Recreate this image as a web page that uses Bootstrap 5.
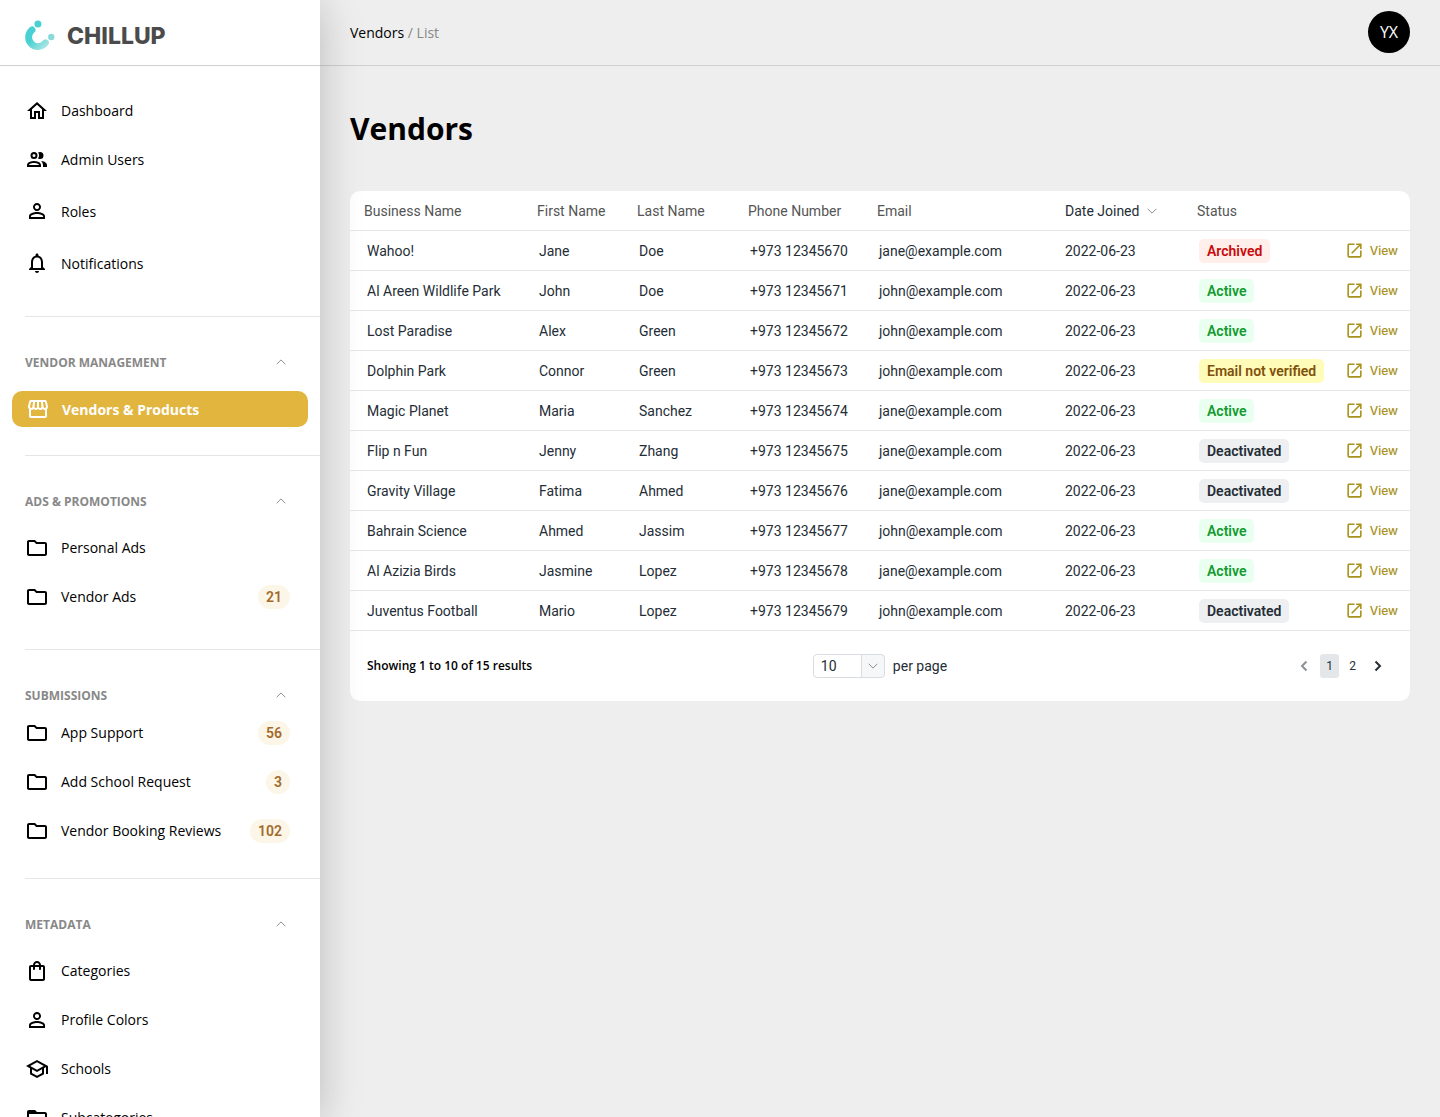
<!DOCTYPE html>
<html lang="en">
<head>
<meta charset="utf-8">
<meta name="viewport" content="width=device-width, initial-scale=1">
<title>Vendors - Chillup</title>
<link rel="stylesheet" href="https://cdn.jsdelivr.net/npm/bootstrap@5.3.0/dist/css/bootstrap.min.css">
<style>
  body { background: #eee; font-family: "Open Sans", "Noto Sans", sans-serif; font-size: 14px; color: #000; }
  a { color: inherit; text-decoration: none; }
  .ico { width: 24px; height: 24px; fill: currentColor; flex: none; }
  .chev { width: 10px; height: 6px; fill: none; stroke: #8f8f8f; flex: none; }
  .topbar { height: 66px; border-bottom: 1px solid #cfcfcf; }

  .sidebar { width: 320px; background: #fff; box-shadow: 0 4px 40px rgba(0, 0, 0, .22); overflow: hidden; z-index: 1; }
  .brand { padding: 6px 0 0 23px; gap: 12px; }
  .brand-name { font: 800 23px/32px Inter, sans-serif; color: #4b4b4b; }
  .menu-start { padding: 20px 0 27px; }
  .menu-link { height: 49px; padding: 0 30px 0 25px; gap: 12px; }
  .menu-tall { margin-top: 1px; }
  .menu-tall .menu-link { height: 52px; }
  .menu-section { margin-left: 25px; border-top: 1px solid #e6e6e6; padding: 35px 0 28px; }
  .menu-section .menu-link { padding-left: 0; }
  .menu-title { height: 22px; padding: 0 34px 0 0; border: 0; background: none; font-size: 12px; font-weight: 700; color: #888; margin-bottom: 10px; }
  .menu-title .chev { margin-bottom: 3px; }
  .menu-section.tight .menu-title { margin-bottom: 1px; }
  .menu-section.tight { padding-bottom: 23px; }
  .menu-active { height: 36px; margin: 17px 12px 0 -13px; padding: 0 14px; gap: 12px; border-radius: 10px; background: #e2b53e; color: #fff; font-weight: 700; }
  .count { height: 24px; padding: 0 8px; border-radius: 12px; background: #fcf6e8; color: #a3692a; font: 600 14px/24px Roboto, sans-serif; }

  .page-head { padding: 0 30px 2px; }
  .crumbs { font-weight: 500; padding-top: 2px; }
  .crumb-now { color: #888; font-weight: 400; }
  .avatar { width: 42px; height: 42px; border-radius: 50%; background: #000; color: #fff; border: 0; font: 500 16px/20px "Open Sans", sans-serif; padding: 0; }
  .page-body { padding: 40px 30px; }
  .page-title { font-size: 30px; line-height: 45px; font-weight: 700; margin: 0 0 40px; }

  .panel { background: #fff; border-radius: 10px; font-family: Roboto, sans-serif; color: #252d36; }
  .vendors { width: 100%; table-layout: fixed; border-collapse: separate; border-spacing: 0; }
  .vendors th, .vendors td { height: 40px; padding: 0 0 0 16px; border-bottom: 1px solid #e5e7ea; white-space: nowrap; line-height: 20px; }
  .vendors th { padding-left: 14px; font-weight: 400; color: #555; }
  .vendors td.biz { padding: 0 16px 0 17px; white-space: normal; vertical-align: top; }
  .biz-name { height: 38px; padding-top: 8px; line-height: 24px; overflow: hidden; }
  .vendors td.joined { padding-left: 14px; }
  .vendors td.act, .vendors th.act { padding: 0 12px 0 0; }
  .c-biz { width: 173px; } .c-first { width: 100px; } .c-last { width: 111px; } .c-phone { width: 129px; }
  .c-mail { width: 188px; } .c-date { width: 132px; } .c-status { width: 146px; }
  .sort { border: 0; background: none; padding: 0; color: #252d36; gap: 8px; }
  .state { display: inline-block; height: 24px; padding: 0 8px; border-radius: 5px; font-weight: 600; line-height: 24px; vertical-align: middle; }
  .st-archived { background: #ffeeea; color: #c90a0a; }
  .st-active { background: #e9ffef; color: #149a2e; }
  .st-email { background: #fffbb8; color: #80510b; }
  .st-off { background: #eeeff1; color: #252d36; }
  .view-link { color: #a8911d; gap: 6px; font: 500 12px/20px Inter, sans-serif; }
  .view-link .ico { width: 19px; height: 19px; }

  .panel-foot { display: grid; grid-template-columns: 1fr auto 1fr; align-items: center; padding: 23px 17px; }
  .showing { font: 600 12px/20px "Open Sans", sans-serif; color: #000; }
  .per-page { gap: 8px; }
  .size-box { position: relative; }
  .size-box select { appearance: none; display: block; width: 72px; height: 24px; padding: 0 7px; border: 1px solid #d9dde1; border-radius: 4px; color: #252d36; line-height: 20px;
    background: linear-gradient(to right, #fff 47px, #d9dde1 47px, #d9dde1 48px, #f5f7f9 48px); }
  .size-box .chev { position: absolute; right: 7px; top: 9px; }
  .pager { gap: 4px; padding-right: 3px; }
  .pager button { height: 24px; width: 19px; border: 0; border-radius: 3px; background: none; padding: 0; color: #252d36; font-size: 12px; }
  .pager .step { width: 24px; }
  .pager .step svg { width: 8px; height: 12px; fill: none; stroke: currentColor; stroke-width: 2; display: block; margin: auto; }
  .pager .current { background: #e4e7ea; }
  .pager .step:disabled { color: #8d9297; }
</style>
<script src="https://cdn.jsdelivr.net/npm/bootstrap@5.3.0/dist/js/bootstrap.bundle.min.js"></script>
</head>
<body>
<svg class="d-none" aria-hidden="true">
  <symbol id="i-home" viewBox="0 0 24 24"><path d="M12 5.69l5 4.5V18h-2v-6H9v6H7v-7.81l5-4.5M12 3L2 12h3v8h6v-6h2v6h6v-8h3L12 3z"/></symbol>
  <symbol id="i-people" viewBox="0 0 24 24"><path d="M13.07 10.41A5 5 0 0 0 13.07 4.59A3.39 3.39 0 0 1 15 4A3.5 3.5 0 0 1 15 11A3.39 3.39 0 0 1 13.07 10.41M5.5 7.5A3.5 3.5 0 1 1 9 11A3.5 3.5 0 0 1 5.5 7.5M7.5 7.5A1.5 1.5 0 1 0 9 6A1.5 1.5 0 0 0 7.5 7.5M16 17V19H2V17S2 13 9 13 16 17 16 17M14 17C13.86 16.22 12.67 15 9 15S4.07 16.31 4 17M15.95 13A5.32 5.32 0 0 1 18 17V19H22V17S22 13.37 15.94 13Z"/></symbol>
  <symbol id="i-person" viewBox="0 0 24 24"><path d="M12 5.9c1.16 0 2.1.94 2.1 2.1s-.94 2.1-2.1 2.1S9.9 9.16 9.9 8s.94-2.1 2.1-2.1m0 9c2.97 0 6.1 1.46 6.1 2.1v1.1H5.9V17c0-.64 3.13-2.1 6.1-2.1M12 4C9.79 4 8 5.79 8 8s1.79 4 4 4 4-1.79 4-4-1.79-4-4-4zm0 9c-2.67 0-8 1.34-8 4v3h16v-3c0-2.66-5.33-4-8-4z"/></symbol>
  <symbol id="i-bell" viewBox="0 0 24 24"><path d="M12 22c1.1 0 2-.9 2-2h-4c0 1.1.9 2 2 2zm6-6v-5c0-3.07-1.63-5.64-4.5-6.32V4c0-.83-.67-1.5-1.5-1.5s-1.5.67-1.5 1.5v.68C7.64 5.36 6 7.92 6 11v5l-2 2v1h16v-1l-2-2zm-2 1H8v-6c0-2.48 1.51-4.5 4-4.5s4 2.02 4 4.5v6z"/></symbol>
  <symbol id="i-store" viewBox="0 0 24 24"><path d="M21.9 8.89l-1.05-4.37c-.22-.9-1-1.52-1.91-1.52H5.05c-.9 0-1.69.63-1.9 1.52L2.1 8.89c-.24 1.02-.02 2.06.62 2.88.08.11.19.19.28.29V19c0 1.1.9 2 2 2h14c1.1 0 2-.9 2-2v-6.94c.09-.09.2-.18.28-.28.64-.82.87-1.87.62-2.89zm-2.99-3.9l1.05 4.37c.1.42.01.84-.25 1.17-.14.18-.44.47-.94.47-.61 0-1.14-.49-1.21-1.14L16.98 5l1.93-.01zM13 5h1.96l.54 4.52c.05.39-.07.78-.33 1.07-.22.26-.54.41-.95.41-.67 0-1.22-.59-1.22-1.31V5zM8.49 9.52L9.04 5H11v4.69c0 .72-.55 1.31-1.29 1.31-.34 0-.65-.15-.89-.41-.25-.29-.37-.68-.33-1.07zm-4.45-.16L5.05 5h1.97l-.58 4.86c-.08.65-.6 1.14-1.21 1.14-.49 0-.8-.29-.93-.47-.27-.32-.36-.75-.26-1.17zM5 19v-6.03c.08.01.15.03.23.03.87 0 1.66-.36 2.24-.95.6.6 1.4.95 2.31.95.87 0 1.65-.36 2.23-.93.59.57 1.39.93 2.29.93.84 0 1.64-.35 2.24-.95.58.59 1.37.95 2.24.95.08 0 .15-.02.23-.03V19H5z"/></symbol>
  <symbol id="i-folder" viewBox="0 0 24 24"><path d="M9.17 6l2 2H20v10H4V6h5.17M10 4H4c-1.1 0-1.99.9-1.99 2L2 18c0 1.1.9 2 2 2h16c1.1 0 2-.9 2-2V8c0-1.1-.9-2-2-2h-8l-2-2z"/></symbol>
  <symbol id="i-folder-tab" viewBox="0 0 24 24"><path d="M20 18H4V8h16M20 6h-8l-2-2H4C2.89 4 2 4.89 2 6v12a2 2 0 0 0 2 2h16a2 2 0 0 0 2-2V8c0-1.11-.9-2-2-2z"/></symbol>
  <symbol id="i-bag" viewBox="0 0 24 24"><path d="M18 6h-2c0-2.21-1.79-4-4-4S8 3.79 8 6H6c-1.1 0-2 .9-2 2v12c0 1.1.9 2 2 2h12c1.1 0 2-.9 2-2V8c0-1.1-.9-2-2-2zm-6-2c1.1 0 2 .9 2 2h-4c0-1.1.9-2 2-2zm6 16H6V8h2v2c0 .55.45 1 1 1s1-.45 1-1V8h4v2c0 .55.45 1 1 1s1-.45 1-1V8h2v12z"/></symbol>
  <symbol id="i-school" viewBox="0 0 24 24"><path d="M12 3L1 9l4 2.18v6L12 21l7-3.82v-6l2-1.09V17h2V9L12 3zm6.82 6L12 12.72 5.18 9 12 5.28 18.82 9zM17 15.99l-5 2.73-5-2.73v-3.72L12 15l5-2.73v3.72z"/></symbol>
  <symbol id="i-open" viewBox="0 0 24 24"><path d="M19 19H5V5h7V3H5c-1.11 0-2 .9-2 2v14c0 1.1.89 2 2 2h14c1.1 0 2-.9 2-2v-7h-2v7zM14 3v2h3.59l-9.83 9.83 1.41 1.41L19 6.41V10h2V3h-7z"/></symbol>
  <symbol id="i-up" viewBox="0 0 10 6"><path d="M.7 5.2L5 .9l4.3 4.3"/></symbol>
  <symbol id="i-down" viewBox="0 0 10 6"><path d="M.7.8L5 5.1 9.3.8"/></symbol>
</svg>

<div class="d-flex vh-100">
  <aside class="sidebar flex-shrink-0">
    <a href="#" class="brand topbar d-flex align-items-center">
      <svg width="32" height="32" viewBox="0 0 30 30" aria-hidden="true">
        <defs><linearGradient id="arc" x1="0" y1="0" x2="1" y2="1"><stop offset=".35" stop-color="#48d0d2"/><stop offset="1" stop-color="#a5e5e2"/></linearGradient></defs>
        <path d="M9 9.600a8.800 8.800 0 1 0 12.600 12.100" fill="none" stroke="url(#arc)" stroke-width="6.400" stroke-linecap="round" transform="translate(-.5 -.3)"/>
        <circle cx="14" cy="3.700" r="3.300" fill="#48d0d2"/><circle cx="26.500" cy="16" r="3" fill="#8adcdb"/>
      </svg>
      <span class="brand-name">CHILLUP</span>
    </a>
    <nav>
      <div class="menu-start">
        <a href="#" class="menu-link d-flex align-items-center"><svg class="ico"><use href="#i-home"/></svg>Dashboard</a>
        <a href="#" class="menu-link d-flex align-items-center"><svg class="ico"><use href="#i-people"/></svg>Admin Users</a>
        <div class="menu-tall">
          <a href="#" class="menu-link d-flex align-items-center"><svg class="ico"><use href="#i-person"/></svg>Roles</a>
          <a href="#" class="menu-link d-flex align-items-center"><svg class="ico"><use href="#i-bell"/></svg>Notifications</a>
        </div>
      </div>
      <section class="menu-section">
        <button type="button" class="menu-title d-flex align-items-center justify-content-between w-100">VENDOR MANAGEMENT<svg class="chev"><use href="#i-up"/></svg></button>
        <a href="#" class="menu-active d-flex align-items-center" aria-current="page"><svg class="ico"><use href="#i-store"/></svg>Vendors &amp; Products</a>
      </section>
      <section class="menu-section">
        <button type="button" class="menu-title d-flex align-items-center justify-content-between w-100">ADS &amp; PROMOTIONS<svg class="chev"><use href="#i-up"/></svg></button>
        <a href="#" class="menu-link d-flex align-items-center"><svg class="ico"><use href="#i-folder"/></svg>Personal Ads</a>
        <a href="#" class="menu-link d-flex align-items-center"><svg class="ico"><use href="#i-folder"/></svg>Vendor Ads<span class="count ms-auto">21</span></a>
      </section>
      <section class="menu-section tight">
        <button type="button" class="menu-title d-flex align-items-center justify-content-between w-100">SUBMISSIONS<svg class="chev"><use href="#i-up"/></svg></button>
        <a href="#" class="menu-link d-flex align-items-center"><svg class="ico"><use href="#i-folder"/></svg>App Support<span class="count ms-auto">56</span></a>
        <a href="#" class="menu-link d-flex align-items-center"><svg class="ico"><use href="#i-folder"/></svg>Add School Request<span class="count ms-auto">3</span></a>
        <a href="#" class="menu-link d-flex align-items-center"><svg class="ico"><use href="#i-folder"/></svg>Vendor Booking Reviews<span class="count ms-auto">102</span></a>
      </section>
      <section class="menu-section">
        <button type="button" class="menu-title d-flex align-items-center justify-content-between w-100">METADATA<svg class="chev"><use href="#i-up"/></svg></button>
        <a href="#" class="menu-link d-flex align-items-center"><svg class="ico"><use href="#i-bag"/></svg>Categories</a>
        <a href="#" class="menu-link d-flex align-items-center"><svg class="ico"><use href="#i-person"/></svg>Profile Colors</a>
        <a href="#" class="menu-link d-flex align-items-center"><svg class="ico"><use href="#i-school"/></svg>Schools</a>
        <a href="#" class="menu-link d-flex align-items-center"><svg class="ico"><use href="#i-folder-tab"/></svg>Subcategories</a>
      </section>
    </nav>
  </aside>

  <div class="flex-grow-1 overflow-auto">
    <header class="topbar page-head d-flex align-items-center justify-content-between">
      <nav class="crumbs" aria-label="Breadcrumb"><a href="#">Vendors</a> <span class="crumb-now">/ List</span></nav>
      <button type="button" class="avatar">YX</button>
    </header>
    <main class="page-body">
      <h1 class="page-title">Vendors</h1>
      <div class="panel">
        <table class="vendors">
          <colgroup><col class="c-biz"><col class="c-first"><col class="c-last"><col class="c-phone"><col class="c-mail"><col class="c-date"><col class="c-status"><col></colgroup>
          <thead>
            <tr><th>Business Name</th><th>First Name</th><th>Last Name</th><th>Phone Number</th><th>Email</th>
            <th><button type="button" class="sort d-flex align-items-center">Date Joined<svg class="chev"><use href="#i-down"/></svg></button></th><th>Status</th><th class="act"></th></tr>
          </thead>
          <tbody>
            <tr><td class="biz"><div class="biz-name">Wahoo!</div></td><td>Jane</td><td>Doe</td><td>+973 12345670</td><td>jane@example.com</td><td class="joined">2022-06-23</td><td><span class="state st-archived">Archived</span></td><td class="act"><a href="#" class="view-link d-flex align-items-center justify-content-end"><svg class="ico"><use href="#i-open"/></svg>View</a></td></tr>
            <tr><td class="biz"><div class="biz-name">Al Areen Wildlife Park</div></td><td>John</td><td>Doe</td><td>+973 12345671</td><td>john@example.com</td><td class="joined">2022-06-23</td><td><span class="state st-active">Active</span></td><td class="act"><a href="#" class="view-link d-flex align-items-center justify-content-end"><svg class="ico"><use href="#i-open"/></svg>View</a></td></tr>
            <tr><td class="biz"><div class="biz-name">Lost Paradise</div></td><td>Alex</td><td>Green</td><td>+973 12345672</td><td>john@example.com</td><td class="joined">2022-06-23</td><td><span class="state st-active">Active</span></td><td class="act"><a href="#" class="view-link d-flex align-items-center justify-content-end"><svg class="ico"><use href="#i-open"/></svg>View</a></td></tr>
            <tr><td class="biz"><div class="biz-name">Dolphin Park</div></td><td>Connor</td><td>Green</td><td>+973 12345673</td><td>john@example.com</td><td class="joined">2022-06-23</td><td><span class="state st-email">Email not verified</span></td><td class="act"><a href="#" class="view-link d-flex align-items-center justify-content-end"><svg class="ico"><use href="#i-open"/></svg>View</a></td></tr>
            <tr><td class="biz"><div class="biz-name">Magic Planet</div></td><td>Maria</td><td>Sanchez</td><td>+973 12345674</td><td>jane@example.com</td><td class="joined">2022-06-23</td><td><span class="state st-active">Active</span></td><td class="act"><a href="#" class="view-link d-flex align-items-center justify-content-end"><svg class="ico"><use href="#i-open"/></svg>View</a></td></tr>
            <tr><td class="biz"><div class="biz-name">Flip n Fun</div></td><td>Jenny</td><td>Zhang</td><td>+973 12345675</td><td>jane@example.com</td><td class="joined">2022-06-23</td><td><span class="state st-off">Deactivated</span></td><td class="act"><a href="#" class="view-link d-flex align-items-center justify-content-end"><svg class="ico"><use href="#i-open"/></svg>View</a></td></tr>
            <tr><td class="biz"><div class="biz-name">Gravity Village</div></td><td>Fatima</td><td>Ahmed</td><td>+973 12345676</td><td>jane@example.com</td><td class="joined">2022-06-23</td><td><span class="state st-off">Deactivated</span></td><td class="act"><a href="#" class="view-link d-flex align-items-center justify-content-end"><svg class="ico"><use href="#i-open"/></svg>View</a></td></tr>
            <tr><td class="biz"><div class="biz-name">Bahrain Science</div></td><td>Ahmed</td><td>Jassim</td><td>+973 12345677</td><td>john@example.com</td><td class="joined">2022-06-23</td><td><span class="state st-active">Active</span></td><td class="act"><a href="#" class="view-link d-flex align-items-center justify-content-end"><svg class="ico"><use href="#i-open"/></svg>View</a></td></tr>
            <tr><td class="biz"><div class="biz-name">Al Azizia Birds</div></td><td>Jasmine</td><td>Lopez</td><td>+973 12345678</td><td>jane@example.com</td><td class="joined">2022-06-23</td><td><span class="state st-active">Active</span></td><td class="act"><a href="#" class="view-link d-flex align-items-center justify-content-end"><svg class="ico"><use href="#i-open"/></svg>View</a></td></tr>
            <tr><td class="biz"><div class="biz-name">Juventus Football Club</div></td><td>Mario</td><td>Lopez</td><td>+973 12345679</td><td>john@example.com</td><td class="joined">2022-06-23</td><td><span class="state st-off">Deactivated</span></td><td class="act"><a href="#" class="view-link d-flex align-items-center justify-content-end"><svg class="ico"><use href="#i-open"/></svg>View</a></td></tr>
          </tbody>
        </table>
        <div class="panel-foot">
          <div class="showing">Showing 1 to 10 of 15 results</div>
          <div class="per-page d-flex align-items-center">
            <div class="size-box">
              <select id="page-size"><option>10</option><option>25</option><option>50</option></select>
              <svg class="chev pe-none"><use href="#i-down"/></svg>
            </div>
            <label for="page-size">per page</label>
          </div>
          <nav class="pager d-flex justify-content-end" aria-label="Pages">
            <button type="button" class="step" disabled aria-label="Previous page"><svg viewBox="0 0 8 12"><path d="M6.500 1.500L2 6l4.500 4.500"/></svg></button>
            <button type="button" class="current">1</button>
            <button type="button">2</button>
            <button type="button" class="step" aria-label="Next page"><svg viewBox="0 0 8 12"><path d="M1.500 1.500L6 6l-4.500 4.500"/></svg></button>
          </nav>
        </div>
      </div>
    </main>
  </div>
</div>
</body>
</html>
